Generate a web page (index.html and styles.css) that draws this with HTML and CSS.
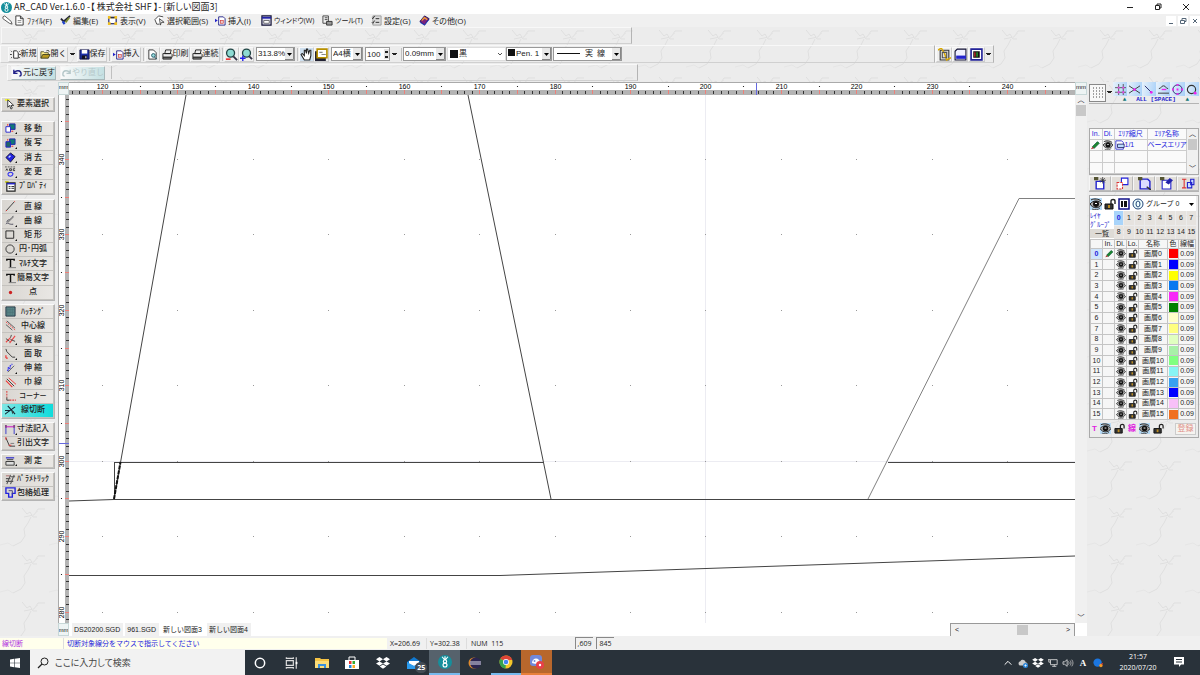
FILE: index.html
```html
<!DOCTYPE html>
<html lang="ja">

<head>
  <meta charset="UTF-8" />
  <meta name="viewport" content="width=device-width, initial-scale=1.0" />
  <title>AR_CAD Ver.1.6.0</title>
  <link rel="stylesheet" href="styles.css">
</head>

<body>
  <!-- icon sprite -->
  <svg class="sprite" aria-hidden="true">
    <symbol id="i-logo" viewBox="0 0 12 12">
      <circle cx="6" cy="6" r="6" fill="#168f9c" />
      <path d="M6 4.500L3.500 1.500M6 4.500L8.500 1.500M6 4.500V1" stroke="#fff" fill="none" />
      <circle cx="6" cy="5.500" r="1.400" fill="none" stroke="#fff" />
      <circle cx="6" cy="8.600" r="1.700" fill="none" stroke="#fff" />
    </symbol>
    <symbol id="i-pencil" viewBox="0 0 12 12">
      <path d="M1 2l2-1 7 6 1 3-3-1-7-5z" fill="#fff" stroke="#555" />
    </symbol>
    <symbol id="i-page" viewBox="0 0 12 12">
      <path d="M2 1h5l3 3v7H2zM7 1v3h3" fill="#fff" stroke="#333" />
      <path d="M4 6h4M4 8h4" stroke="#888" />
    </symbol>
    <symbol id="i-edit" viewBox="0 0 12 12">
      <path d="M1 4l3 3 7-6" stroke="#223" stroke-width="2" fill="none" />
      <path d="M3 7l2 3" stroke="#24c" stroke-width="2.500" />
      <path d="M6 8l4-5" stroke="#7a8a30" stroke-width="2" />
    </symbol>
    <symbol id="i-view" viewBox="0 0 12 12">
      <rect x="2" y="2.500" width="8" height="7" fill="#fff" stroke="#226" stroke-width="1.300" />
      <path d="M1 1h3v3H1zM8 1h3v3H8zM1 8h3v3H1zM8 8h3v3H8z" fill="#f0c020" />
      <path d="M4 3h4" stroke="#333" stroke-width="1.500" />
    </symbol>
    <symbol id="i-range" viewBox="0 0 12 12">
      <path d="M10 2L5 1 1 5l2 5 3 0M6 4l1 7 1-3 3 0z" fill="#fff" stroke="#444" />
    </symbol>
    <symbol id="i-insert" viewBox="0 0 12 12">
      <path d="M4 2h5l2 2v7H4z" fill="#fff" stroke="#228" />
      <path d="M0 4l3 2-3 2z" fill="#22c" />
      <rect x="6" y="6" width="3" height="3" fill="#ecc" stroke="#c33" stroke-width=".7" />
    </symbol>
    <symbol id="i-window" viewBox="0 0 12 12">
      <path d="M1 1h10v10H1z" fill="#dde" stroke="#113" stroke-width="1.300" />
      <path d="M1 2h10v2H1z" fill="#22a" />
      <path d="M3 6h6v3H3z" fill="#fff" stroke="#333" stroke-width=".7" />
    </symbol>
    <symbol id="i-tool" viewBox="0 0 12 12">
      <path d="M1 1h6v8H1zM3 3h3M3 5h3" fill="#eee" stroke="#444" />
      <path d="M5 7h6v4H5z" fill="#999" stroke="#333" />
    </symbol>
    <symbol id="i-set" viewBox="0 0 12 12">
      <path d="M2 1h9v10H2z" fill="#ddd" stroke="#999" />
      <path d="M1 3l1 1 2-3M1 8l1 1 2-3M5 4h4M5 8h4" stroke="#222" fill="none" />
    </symbol>
    <symbol id="i-book" viewBox="0 0 12 12">
      <path d="M1 7l5-6 5 3-5 7z" fill="#7a2380" stroke="#215" />
      <path d="M3 6l3-3 3 2" stroke="#e93" fill="none" stroke-width="1.500" />
      <path d="M1 8l5 3 5-6" stroke="#24c" fill="none" />
    </symbol>
    <symbol id="i-new" viewBox="0 0 12 12">
      <path d="M4 2h3l2 2v6H4z" fill="#fff" stroke="#222" />
      <path d="M1 2l1 1M0 6h2M1 10l1-1M11 2l-1 1M12 6h-2M11 10l-1-1" stroke="#333" />
    </symbol>
    <symbol id="i-open" viewBox="0 0 12 12">
      <path d="M1 10V3h3l1 1h4v2" fill="#fe8" stroke="#553" />
      <path d="M1 10l2-4h8l-2 4z" fill="#b99a20" stroke="#442" />
      <path d="M7 2c2-1 3 0 3 1" fill="none" stroke="#222" />
    </symbol>
    <symbol id="i-save" viewBox="0 0 12 12">
      <path d="M1 1h10v10H1z" fill="#1c2fa8" stroke="#114" />
      <path d="M3 1h6v4H3z" fill="#fff" />
      <path d="M3 7h6v4H3z" fill="#112" />
      <path d="M7 8h1v2H7z" fill="#fff" />
    </symbol>
    <symbol id="i-preview" viewBox="0 0 12 12">
      <path d="M2 1h5l3 3v7H2z" fill="#fff" stroke="#333" />
      <circle cx="7" cy="7" r="2" fill="#9dd" stroke="#256" />
      <path d="M8 9l3 2" stroke="#256" />
    </symbol>
    <symbol id="i-print" viewBox="0 0 12 12">
      <path d="M3 5l1-4h6l-1 4zM1 5h9l1 1v3H1z" fill="#eee" stroke="#222" />
      <path d="M1 9h9v2H1z" fill="#888" stroke="#222" />
    </symbol>
    <symbol id="i-zoomout" viewBox="0 0 14 14">
      <circle cx="6" cy="5.500" r="4.300" fill="#8edbd3" stroke="#244" stroke-width="1.400" />
      <path d="M9 9l4 4" stroke="#334" stroke-width="2" />
      <path d="M1 12h5" stroke="#e22" stroke-width="1.600" />
    </symbol>
    <symbol id="i-zoomin" viewBox="0 0 14 14">
      <circle cx="7" cy="5.500" r="4.300" fill="#8edbd3" stroke="#244" stroke-width="1.400" />
      <path d="M10 9l3 3" stroke="#334" stroke-width="2" />
      <path d="M0 11h6M3 8v6" stroke="#22e" stroke-width="1.500" />
    </symbol>
    <symbol id="i-hand" viewBox="0 0 12 12">
      <path d="M4 11L1 6l1-1 2 2V2l1 0 1 3V1h1l1 4 1-3 1 0v5l-1 4z" fill="#fff" stroke="#222" />
    </symbol>
    <symbol id="i-sheet" viewBox="0 0 12 12">
      <path d="M0 3h10v9H0z" fill="#223" />
      <path d="M2 1h9v8H2z" fill="#fff" stroke="#b89000" stroke-width="1.500" />
      <path d="M4 4h3M6 6h4" stroke="#888" />
    </symbol>
    <symbol id="i-p1" viewBox="0 0 12 12">
      <path d="M2 2h8v9H2z" fill="#ddd" stroke="#333" />
      <path d="M0 2l3-2 3 5 2 6 4-2" fill="none" stroke="#d9a800" stroke-width="1.300" />
      <path d="M4 4h4v5H4z" fill="none" stroke="#555" />
    </symbol>
    <symbol id="i-p2" viewBox="0 0 12 12">
      <path d="M1 3l2-2h8v10H1z" fill="#eef" stroke="#113" />
      <path d="M2 7h9v3H2z" fill="#22c" />
    </symbol>
    <symbol id="i-p3" viewBox="0 0 12 12">
      <path d="M1 1h10v10H1z" fill="#fff" stroke="#229" stroke-width="1.500" />
      <path d="M3 3h6v6H3z" fill="#111" />
      <path d="M4 4h1v4H4z" fill="#e33" />
      <path d="M6 4h1v4H6z" fill="#3c3" />
    </symbol>
    <symbol id="i-undo" viewBox="0 0 12 12">
      <path d="M2 3v4h4M2 7c2-4 8-4 8 1 0 1-1 2-2 2" fill="none" stroke="currentColor" stroke-width="1.500" />
    </symbol>
    <symbol id="i-redo" viewBox="0 0 12 12">
      <path d="M10 3v4H6M10 7C8 3 2 3 2 8c0 1 1 2 2 2" fill="none" stroke="currentColor" stroke-width="1.500" />
    </symbol>
    <!-- left palette -->
    <symbol id="t-select" viewBox="0 0 12 12">
      <path d="M0 1h5" stroke="#ee3" stroke-width="2" />
      <path d="M3 1v8l2-2 1.500 4 1.500-1-1.500-3h3z" fill="#fff" stroke="#333" />
    </symbol>
    <symbol id="t-move" viewBox="0 0 12 12">
      <path d="M5 1h6v6H5z" fill="#177" stroke="#22a" />
      <path d="M1 4h5v6H1z" fill="#fff" stroke="#22c" />
      <path d="M3 1v2M9 9h-2" stroke="#e22" />
    </symbol>
    <symbol id="t-copy" viewBox="0 0 12 12">
      <path d="M5 1h6v6H5z" fill="#177" stroke="#22a" />
      <path d="M1 4h5v6H1z" fill="#266" stroke="#22c" />
      <path d="M3 1v2M9 9h-2" stroke="#e22" />
    </symbol>
    <symbol id="t-erase" viewBox="0 0 12 12">
      <path d="M1 6l5-5 5 4-5 6z" fill="#22d" stroke="#113" />
      <path d="M4 6l2-2" stroke="#cdf" stroke-width="1.500" />
    </symbol>
    <symbol id="t-change" viewBox="0 0 12 12">
      <path d="M0 1h12" stroke="#555" stroke-dasharray="2 1" />
      <path d="M1 5l1-2 1 2M5 3v2h2V3zM11 3H9v2h2" stroke="#333" fill="none" />
      <path d="M3 9c1-3 5-3 6 0M9 8c-1 4-5 4-6 1" stroke="#33e" fill="none" stroke-width="1.200" />
    </symbol>
    <symbol id="t-prop" viewBox="0 0 12 12">
      <path d="M0 0h4v2H0z" fill="#cc3" />
      <path d="M2 2h9v9H2z" fill="#fff" stroke="#222" stroke-width="1.300" />
      <path d="M2 3h9" stroke="#22c" stroke-width="1.500" />
      <path d="M4 6h2M4 8h2M7 6h3M7 8h3" stroke="#222" />
    </symbol>
    <symbol id="t-line" viewBox="0 0 12 12"><path d="M1 11L10 1" stroke="#333" /><path d="M10 0l1 1M1 11l1-1" stroke="#e33" /></symbol>
    <symbol id="t-curve" viewBox="0 0 12 12"><path d="M2 8c1-5 3 0 7-7M1 10c2-3 3 1 8 0" stroke="#445" fill="none" /><path d="M3 8l6-6" stroke="#888" stroke-width="1.500" /></symbol>
    <symbol id="t-rect" viewBox="0 0 12 12"><path d="M1 1h8.500v8H1z" fill="none" stroke="#222" /></symbol>
    <symbol id="t-circle" viewBox="0 0 12 12"><circle cx="5.500" cy="5.500" r="4.500" fill="none" stroke="#333" /></symbol>
    <symbol id="t-text" viewBox="0 0 12 12"><path d="M2 3V1.500h8V3M6 2v8" fill="none" stroke="#111" stroke-width="1.600" /><path d="M4 10.500h8" stroke="#777" /></symbol>
    <symbol id="t-point" viewBox="0 0 12 12"><circle cx="6" cy="6" r="1.800" fill="#c22" /></symbol>
    <symbol id="t-hatch" viewBox="0 0 12 12"><path d="M1 1h10v10H1z" fill="#5a8588" stroke="#234" /><path d="M3 1v10M5.500 1v10M8 1v10M1 4h10M1 7h10" stroke="#486e74" stroke-width=".6" /></symbol>
    <symbol id="t-center" viewBox="0 0 12 12"><path d="M2 1l9 8M1 5l7 6" stroke="#555" /><path d="M1 2l10 9" stroke="#e44" stroke-dasharray="2 1" /></symbol>
    <symbol id="t-double" viewBox="0 0 12 12"><path d="M1 9l5-5M5 10l6-8" stroke="#e44" stroke-width="1.200" /><path d="M1 5l4 3M7 1l-1 3M6 6l5 2" stroke="#444" /></symbol>
    <symbol id="t-chamfer" viewBox="0 0 12 12"><path d="M1 1l1 3 6 6h3" stroke="#333" fill="none" /><path d="M1 8v3M3 11H1" stroke="#e33" stroke-width="1.300" /></symbol>
    <symbol id="t-extend" viewBox="0 0 12 12"><path d="M3 6l5-5M6 5L2 9" stroke="#33e" stroke-width="1.400" stroke-dasharray="2 1" /><path d="M3 10l7-7" stroke="#555" /></symbol>
    <symbol id="t-width" viewBox="0 0 12 12"><path d="M1 4l7 7" stroke="#e33" stroke-width="1.200" /><path d="M4 1l8 7" stroke="#e33" /><path d="M2 2l8 8" stroke="#333" /></symbol>
    <symbol id="t-corner" viewBox="0 0 12 12"><path d="M2 0v7M5 10h7" stroke="#d44" stroke-dasharray="2 1" stroke-width="1.200" /><path d="M2 7v3h3" stroke="#333" fill="none" /></symbol>
    <symbol id="t-cut" viewBox="0 0 12 12"><path d="M0 10L11 2M3 1l8 9M0 6h6" stroke="#123" stroke-width="1.200" /><path d="M7 6l3 1-2 3z" fill="#344" /></symbol>
    <symbol id="t-dim" viewBox="0 0 12 12"><path d="M1 11V3M10 11V3" stroke="#33c" /><path d="M1 3h9" stroke="#c3c" stroke-width="1.300" /><path d="M0 1h2v3H0zM9 1h2v3H9z" fill="#848" /></symbol>
    <symbol id="t-leader" viewBox="0 0 12 12"><path d="M1 1l4 9h6" stroke="#333" fill="none" /><path d="M4 9h3M1 0v3" stroke="#e33" /><path d="M6 7h4" stroke="#777" /></symbol>
    <symbol id="t-measure" viewBox="0 0 12 12"><path d="M1 2h9" stroke="#33c" stroke-width="1.400" /><path d="M1 6h9v4H1zM2 4h7" fill="#ddd" stroke="#333" /></symbol>
    <symbol id="t-param" viewBox="0 0 12 12"><path d="M2 11L6 1M6 11l4-10M1 5h5M6 3h5M1 8h8" stroke="#555" stroke-width="1.200" fill="none" /><path d="M1 2h4" stroke="#a66" /></symbol>
    <symbol id="t-wrap" viewBox="0 0 12 12"><path d="M1 1h10v6H8v4H4V7H1z" fill="none" stroke="#22d" stroke-width="1.500" /><path d="M4 4h4v4" fill="none" stroke="#447" /></symbol>
    <!-- right panel -->
    <symbol id="s-grid" viewBox="0 0 12 12"><path d="M4 0v12M9 0v12M0 4h12M0 9h12" stroke="#555" /><path d="M3 3h2v2H3zM8 3h2v2H8zM3 8h2v2H3zM8 8h2v2H8z" fill="#e4e" /></symbol>
    <symbol id="s-cross" viewBox="0 0 12 12"><path d="M0 2l12 8M0 10l12-8" stroke="#333" /><circle cx="6" cy="6" r="1.500" fill="#e2e" /></symbol>
    <symbol id="s-end" viewBox="0 0 12 12"><path d="M2 2l7 7" stroke="#226" /><circle cx="9" cy="9" r="1.500" fill="#e2e" /></symbol>
    <symbol id="s-mid" viewBox="0 0 12 12"><path d="M1 5c3 0 2-3 5-3s2 3 5 3M0 10h12" fill="none" stroke="#333" /><path d="M4 6h5" stroke="#e2e" stroke-width="1.500" /></symbol>
    <symbol id="s-cen" viewBox="0 0 12 12"><circle cx="6" cy="6" r="5" fill="none" stroke="#226" /><path d="M6 5v2M6 0v2M6 10v2M0 6h2M10 6h2" stroke="#e2e" stroke-width="2" /></symbol>
    <symbol id="s-tan" viewBox="0 0 12 12"><circle cx="6" cy="6" r="4.500" fill="none" stroke="#333" stroke-width="1.200" /><circle cx="10" cy="10" r="1.500" fill="#e2e" /></symbol>
    <symbol id="s-dots" viewBox="0 0 12 12"><path d="M1 1h11M1 4h11M1 7h11M1 10h11" stroke="#444" stroke-dasharray="1 2" /></symbol>
    <symbol id="i-eye" viewBox="0 0 12 12">
      <path d="M1 2c3-2 8-1 10 1M0 6c3-4 9-4 12 0-3 5-9 5-12 0z" fill="#aaa" stroke="#222" />
      <circle cx="6" cy="6" r="3" fill="#111" />
      <path d="M5 5h2v1H5z" fill="#fff" />
      <path d="M2 11c3 1 6 1 8-1" stroke="#555" fill="none" />
    </symbol>
    <symbol id="i-lock" viewBox="0 0 12 12">
      <path d="M7 6V3c0-2 4-2 4 0v3" fill="none" stroke="#222" stroke-width="1.400" />
      <path d="M1 6h8v5H1z" fill="#333" stroke="#111" />
      <path d="M4 7h2v3H4z" fill="#b98a20" />
    </symbol>
    <symbol id="i-pen" viewBox="0 0 12 12">
      <path d="M3 8l6-6 2 2-6 6z" fill="#1a8a2a" stroke="#053" />
      <path d="M1 11l2-3 2 2z" fill="#a33" />
    </symbol>
    <symbol id="i-area" viewBox="0 0 12 12"><path d="M1 1h7l2 2v8H1z" fill="#fff" stroke="#22c" /><path d="M3 5h8v4H3z" fill="#bdf" stroke="#226" /></symbol>
    <symbol id="a-new" viewBox="0 0 12 12"><path d="M2 4h7v7H2z" fill="#fff" stroke="#22c" stroke-width="1.300" /><path d="M0 0h4v3H0z" fill="#553" /><path d="M8 0v6M5 3h6M6 1l4 4M10 1L6 5" stroke="#333" stroke-width=".7" /></symbol>
    <symbol id="a-copy" viewBox="0 0 12 12"><path d="M5 1h6v6H5z" fill="#fff" stroke="#22d" /><path d="M1 5h5v6H1z" fill="#fff" stroke="#d33" stroke-dasharray="2 1" /></symbol>
    <symbol id="a-prop" viewBox="0 0 12 12"><path d="M2 2h7l2 2v7H2z" fill="#ddf" stroke="#22c" stroke-width="1.300" /><path d="M0 0h4v3H0z" fill="#553" /><path d="M8 9l4 3" stroke="#333" stroke-width="1.300" /></symbol>
    <symbol id="a-del" viewBox="0 0 12 12"><path d="M2 3h8v8H2z" fill="#fff" stroke="#22c" /><path d="M0 0h4v3H0z" fill="#553" /><path d="M5 5l4-4 3 2-4 4z" fill="#22a" /></symbol>
    <symbol id="a-size" viewBox="0 0 12 12"><path d="M0 2h4M2 2v8M0 10h4" stroke="#d33" fill="none" /><path d="M5 5h4v5H5zM8 2h3v5H8z" fill="#cdf" stroke="#22c" /></symbol>
    <symbol id="i-bars" viewBox="0 0 12 12"><path d="M1 1h10v10H1z" fill="#fff" stroke="#118" stroke-width="1.500" /><path d="M3 3h6v6H3z" fill="#111" /><path d="M5.500 3v6" stroke="#fff" /></symbol>
    <symbol id="i-zero" viewBox="0 0 12 12"><circle cx="6" cy="6" r="5" fill="#eff" stroke="#247" /><ellipse cx="6" cy="6" rx="2" ry="3" fill="none" stroke="#247" /></symbol>
    <!-- taskbar -->
    <symbol id="w-start" viewBox="0 0 12 12"><path d="M0 1.700L5 1v4.700H0zM5.700 .9L12 0v5.700H5.700zM0 6.300h5V11l-5-.7zM5.700 6.300H12V12l-6.300-.9z" fill="#fff" /></symbol>
    <symbol id="w-search" viewBox="0 0 12 12"><circle cx="7.500" cy="4.500" r="3.500" fill="none" stroke="#222" /><path d="M5 7L1 11" stroke="#222" stroke-width="1.200" /></symbol>
    <symbol id="w-cortana" viewBox="0 0 12 12"><circle cx="6" cy="6" r="4" fill="none" stroke="#fff" stroke-width="1.300" /></symbol>
    <symbol id="w-view" viewBox="0 0 12 12"><path d="M2 1v1h6V1M2 11v-1h6v1M2 4h6v4H2zM10.500 1v10" fill="none" stroke="#ddd" /><path d="M10 5h1.500v2H10z" fill="#fff" /></symbol>
    <symbol id="w-folder" viewBox="0 0 14 12"><path d="M0 1h5l1 1h8v9H0z" fill="#f6c445" /><path d="M0 4h14v7H0z" fill="#fbdc78" /><path d="M3 7h8v4H9V9H5v2H3z" fill="#3a8fdc" /></symbol>
    <symbol id="w-store" viewBox="0 0 14 14"><path d="M4 4V1h6v3" fill="none" stroke="#fff" /><path d="M0 4h14v9H0z" fill="#fff" /><path d="M4 5h2.500v3H4z" fill="#e33" /><path d="M7.500 5H10v3H7.500z" fill="#3a3" /><path d="M4 9h2.500v3H4z" fill="#28d" /><path d="M7.500 9H10v3H7.500z" fill="#fa2" /></symbol>
    <symbol id="w-dropbox" viewBox="0 0 14 12"><path d="M3.500 0L7 2.200 3.500 4.400 0 2.200zM10.500 0L14 2.200l-3.500 2.200L7 2.200zM3.500 4.400L7 6.600 3.500 8.800 0 6.600zM10.500 4.400L14 6.600l-3.500 2.200L7 6.600zM7 7.500l3.300 2.100L7 11.800 3.700 9.600z" fill="#fff" /></symbol>
    <symbol id="w-mail" viewBox="0 0 14 12"><path d="M0 5l7-5 7 5v7H0z" fill="#1179d0" /><path d="M2 4h10v3L7 9 2 7z" fill="#fff" /><path d="M0 5l7 4 7-4v7H0z" fill="#2a9bee" /></symbol>
    <symbol id="w-eclipse" viewBox="0 0 14 12"><circle cx="6" cy="6" r="5.500" fill="#e08a2c" /><circle cx="7.500" cy="6" r="5.500" fill="#2b2550" /><path d="M2 5h11M2 7h11" stroke="#dde" stroke-width="1.200" /></symbol>
    <symbol id="w-chrome" viewBox="0 0 14 14"><circle cx="7" cy="7" r="6.500" fill="#f4c62a" /><path d="M7 7L1.400 3.700A6.500 6.500 0 0 1 12.600 3.700z" fill="#dd4436" /><path d="M7 7L1.400 3.700A6.500 6.500 0 0 0 6.500 13.500z" fill="#35a350" /><path d="M7 4h6v1H7z" fill="#dd4436" /><circle cx="7" cy="7" r="3" fill="#fff" /><circle cx="7" cy="7" r="2.300" fill="#4285f4" /></symbol>
    <symbol id="w-discord" viewBox="0 0 14 14"><rect width="12" height="11" x="0" y="0" rx="3" fill="#7289da" /><path d="M2 8c0-6 8-6 8 0-2 1-6 1-8 0z" fill="#fff" /><circle cx="4.500" cy="6" r="1" fill="#7289da" /><circle cx="10" cy="10" r="4" fill="#e8404a" /><circle cx="10" cy="10" r="1.200" fill="#fff" /></symbol>
    <symbol id="w-up" viewBox="0 0 12 12"><path d="M2 8l4-4 4 4" fill="none" stroke="#fff" stroke-width="1.200" /></symbol>
    <symbol id="w-cloud" viewBox="0 0 12 12"><path d="M1 8c-1-3 1-4 2-4 1-3 6-2 6 1 3 0 3 4 0 4H2z" fill="#ccc" /><circle cx="9" cy="9" r="3" fill="#2b85d8" /><path d="M7.500 9h3M9 7.500v3" stroke="#fff" stroke-width=".8" /></symbol>
    <symbol id="w-net" viewBox="0 0 12 12"><path d="M3 2h8v6H3zM5 10h5M7.500 8v2M0 2h3M1 2v3h2" fill="none" stroke="#ddd" /></symbol>
    <symbol id="w-vol" viewBox="0 0 12 12"><path d="M0 4.500h2L5 2v8L2 7.500H0z" fill="none" stroke="#eee" stroke-width=".9" /><path d="M6.500 4c1 1 1 3 0 4M8.500 3c1.500 2 1.500 4 0 6M10.500 2c2 3 2 5 0 8" fill="none" stroke="#ccc" stroke-width=".9" /></symbol>
    <symbol id="w-ball" viewBox="0 0 12 12"><circle cx="5.500" cy="5.500" r="5" fill="#1b76e0" /><circle cx="9.500" cy="9" r="2" fill="#f09a2a" /><circle cx="11" cy="7" r="1" fill="#d33" /></symbol>
    <symbol id="w-note" viewBox="0 0 12 12"><path d="M1 1h10v7.500H8L6 11V8.500H1z" fill="#fff" /><path d="M3 3.500h6M3 6h6" stroke="#29323a" /></symbol>
  </svg>

  <header class="titlebar">
    <svg class="icon"><use href="#i-logo" /></svg>
    <h1>AR_CAD Ver.1.6.0 -【 株式会社 SHF 】- [新しい図面3]</h1>
    <div class="win-buttons">
      <button aria-label="最小化"><svg viewBox="0 0 10 10"><path d="M2 5.500h6" /></svg></button>
      <button aria-label="元に戻す(縮小)"><svg viewBox="0 0 10 10"><path d="M2.500 3.500h4v4h-4zM4 3.500V2h4v4H6.500" /></svg></button>
      <button aria-label="閉じる"><svg viewBox="0 0 10 10"><path d="M2 2l6 6M8 2L2 8" /></svg></button>
    </div>
  </header>

  <nav class="menubar">
    <svg class="icon"><use href="#i-pencil" /></svg>
    <button><svg class="icon"><use href="#i-page" /></svg>ﾌｧｲﾙ(F)</button>
    <button><svg class="icon"><use href="#i-edit" /></svg>編集(E)</button>
    <button><svg class="icon"><use href="#i-view" /></svg>表示(V)</button>
    <button><svg class="icon"><use href="#i-range" /></svg>選択範囲(S)</button>
    <button><svg class="icon"><use href="#i-insert" /></svg>挿入(I)</button>
    <button class="tight"><svg class="icon"><use href="#i-window" /></svg>ウィンドウ(W)</button>
    <button class="tight"><svg class="icon"><use href="#i-tool" /></svg>ツール(T)</button>
    <button><svg class="icon"><use href="#i-set" /></svg>設定(G)</button>
    <button><svg class="icon"><use href="#i-book" /></svg>その他(O)</button>
    <div class="mdi-buttons">
      <button aria-label="最小化"><svg viewBox="0 0 10 10"><path d="M3 7.500h4" /></svg></button>
      <button aria-label="元のサイズ"><svg viewBox="0 0 10 10"><path d="M2.500 4.500h4v3h-4zM4 4V2.500h4v3H7" /></svg></button>
      <button aria-label="図面を閉じる"><svg viewBox="0 0 10 10"><path d="M3 3l4 4M7 3L3 7" /></svg></button>
    </div>
  </nav>

  <div class="toolbars marble">
    <div class="bar bar-empty"></div>
    <div class="bar-row">
      <div class="bar bar-main">
        <button class="tb w30"><svg class="icon"><use href="#i-new" /></svg>新規</button>
        <button class="tb w30"><svg class="icon"><use href="#i-open" /></svg>開く</button>
        <button class="drop" aria-label="最近の図面"></button>
        <button class="tb w30"><svg class="icon"><use href="#i-save" /></svg>保存</button>
        <span class="sep"></span>
        <button class="tb w30"><svg class="icon"><use href="#i-insert" /></svg>挿入</button>
        <span class="sep"></span>
        <button class="tb w14" aria-label="プレビュー"><svg class="icon"><use href="#i-preview" /></svg></button>
        <button class="tb w30"><svg class="icon"><use href="#i-print" /></svg>印刷</button>
        <button class="tb w30"><svg class="icon"><use href="#i-print" /></svg>連続</button>
        <span class="sep"></span>
        <button class="tb w14" aria-label="縮小"><svg class="icon big"><use href="#i-zoomout" /></svg></button>
        <button class="tb w14" aria-label="拡大"><svg class="icon big"><use href="#i-zoomin" /></svg></button>
        <select class="s-zoom" aria-label="倍率"><option>313.8%</option></select>
        <span class="sep"></span>
        <button class="tb w14 on" aria-label="移動表示"><svg class="icon big"><use href="#i-hand" /></svg></button>
        <button class="tb w14" aria-label="用紙"><svg class="icon big"><use href="#i-sheet" /></svg></button>
        <select class="s-paper" aria-label="用紙サイズ"><option>A4横</option></select>
        <span class="spin"><input type="text" value="100" aria-label="縮尺"><i></i></span>
        <button class="drop" aria-label="縮尺一覧"></button>
        <span class="sep"></span>
        <select class="s-width" aria-label="線幅"><option>0.09mm</option></select>
        <select class="s-color" aria-label="色"><option>黒</option></select>
        <select class="s-pen" aria-label="ペン"><option>Pen. 1</option></select>
        <select class="s-style" aria-label="線種"><option>実&ensp;線</option></select>
      </div>
      <div class="bar bar-end">
        <button class="tb w16" aria-label="パネル1"><svg class="icon big"><use href="#i-p1" /></svg></button>
        <button class="tb w16" aria-label="パネル2"><svg class="icon big"><use href="#i-p2" /></svg></button>
        <button class="tb w16" aria-label="パネル3"><svg class="icon big"><use href="#i-p3" /></svg></button>
        <button class="drop" aria-label="パネル一覧"></button>
      </div>
    </div>
    <div class="bar bar-undo">
      <button class="undo"><svg class="icon"><use href="#i-undo" /></svg>元に戻す</button>
      <button class="undo" disabled><svg class="icon"><use href="#i-redo" /></svg>やり直し</button>
      <span class="sep"></span>
    </div>
  </div>

  <main class="main">
    <aside class="palette marble">
      <div class="group g1 first">
        <button><svg class="icon"><use href="#t-select" /></svg><span>要素選択</span></button>
      </div>
      <div class="group g5">
        <button class="sub"><svg class="icon"><use href="#t-move" /></svg><span>移 動</span></button>
        <button class="sub"><svg class="icon"><use href="#t-copy" /></svg><span>複 写</span></button>
        <button class="sub"><svg class="icon"><use href="#t-erase" /></svg><span>消 去</span></button>
        <button class="sub"><svg class="icon"><use href="#t-change" /></svg><span>変 更</span></button>
        <button><svg class="icon"><use href="#t-prop" /></svg><span>ﾌﾟﾛﾊﾟﾃｨ</span></button>
      </div>
      <div class="group g7">
        <button class="sub"><svg class="icon"><use href="#t-line" /></svg><span>直 線</span></button>
        <button class="sub"><svg class="icon"><use href="#t-curve" /></svg><span>曲 線</span></button>
        <button class="sub"><svg class="icon"><use href="#t-rect" /></svg><span>矩 形</span></button>
        <button class="sub"><svg class="icon"><use href="#t-circle" /></svg><span>円･円弧</span></button>
        <button><svg class="icon"><use href="#t-text" /></svg><span>ﾏﾙﾁ文字</span></button>
        <button><svg class="icon"><use href="#t-text" /></svg><span>簡易文字</span></button>
        <button><svg class="icon"><use href="#t-point" /></svg><span>点</span></button>
      </div>
      <div class="group g8">
        <button><svg class="icon"><use href="#t-hatch" /></svg><span>ﾊｯﾁﾝｸﾞ</span></button>
        <button><svg class="icon"><use href="#t-center" /></svg><span>中心線</span></button>
        <button class="sub"><svg class="icon"><use href="#t-double" /></svg><span>複 線</span></button>
        <button class="sub"><svg class="icon"><use href="#t-chamfer" /></svg><span>面 取</span></button>
        <button class="sub"><svg class="icon"><use href="#t-extend" /></svg><span>伸 縮</span></button>
        <button><svg class="icon"><use href="#t-width" /></svg><span>巾 線</span></button>
        <button class="tight"><svg class="icon"><use href="#t-corner" /></svg><span>コーナー</span></button>
        <button class="active"><svg class="icon"><use href="#t-cut" /></svg><span>線切断</span></button>
      </div>
      <div class="group g2">
        <button class="sub"><svg class="icon"><use href="#t-dim" /></svg><span>寸法記入</span></button>
        <button><svg class="icon"><use href="#t-leader" /></svg><span>引出文字</span></button>
      </div>
      <div class="group g1">
        <button class="sub"><svg class="icon"><use href="#t-measure" /></svg><span>測 定</span></button>
      </div>
      <div class="group g2">
        <button><svg class="icon"><use href="#t-param" /></svg><span>ﾊﾟﾗﾒﾄﾘｯｸ</span></button>
        <button><svg class="icon"><use href="#t-wrap" /></svg><span>包絡処理</span></button>
      </div>
    </aside>

    <section class="workspace">
      <div class="unit">mm</div>
      <svg class="ruler-x" id="rulerX"></svg>
      <div class="unit">mm</div>
      <svg class="ruler-y" id="rulerY"></svg>
      <svg class="drawing" id="drawing">
        <path class="guide" d="M0 366.500H2000M636.500 0V1000" />
        <g id="dots"></g>
        <path class="cad" d="M117 0L45 404M399 0L482 404M45 367.500H475M45.500 367V404" />
        <path class="cad" d="M0 406L45 404.500H1006M0 480.500H431L1006 461" />
        <path class="cad soft" d="M799 404L950 103.500H1006" />
        <path class="cad" d="M819 367.500H1006" />
        <path class="cad picked" d="M45 404L51.500 367" />
      </svg>
      <div class="scroll-y"><button aria-label="上へ">︿</button><i></i><button class="down" aria-label="下へ">﹀</button></div>
      <div class="unit foot">mm</div>
      <div class="sheets">
        <button>DS20200.SGD</button>
        <button>961.SGD</button>
        <button class="current">新しい図面3</button>
        <button>新しい図面4</button>
        <div class="scroll-x"><button aria-label="左へ">&lt;</button><i></i><button aria-label="右へ">&gt;</button></div>
      </div>
      <div></div>
    </section>

    <aside class="side marble">
      <div class="snap">
        <button class="snap-grid" aria-label="グリッド"><svg><use href="#s-dots" /></svg></button>
        <button class="drop" aria-label="グリッド設定"></button>
        <div class="snap-set">
          <div class="snap-icons">
            <button aria-label="格子点"><svg class="icon"><use href="#s-grid" /></svg></button>
            <button aria-label="交点"><svg class="icon"><use href="#s-cross" /></svg></button>
            <button aria-label="端点"><svg class="icon"><use href="#s-end" /></svg></button>
            <button aria-label="中点"><svg class="icon"><use href="#s-mid" /></svg></button>
            <button aria-label="中心"><svg class="icon"><use href="#s-cen" /></svg></button>
            <button aria-label="円周"><svg class="icon"><use href="#s-tan" /></svg></button>
          </div>
          <div class="snap-all"><i>▲</i>ALL [SPACE]<i>▲</i></div>
        </div>
      </div>

      <div class="areas">
        <table>
          <thead>
            <tr><th>In.</th><th>Di.</th><th>ｴﾘｱ縮尺</th><th>ｴﾘｱ名称</th></tr>
          </thead>
          <tbody>
            <tr>
              <td><svg class="icon"><use href="#i-pen" /></svg></td>
              <td><svg class="icon"><use href="#i-eye" /></svg></td>
              <td><svg class="icon"><use href="#i-area" /></svg>1/1</td>
              <td class="name">ベースエリア</td>
            </tr>
            <tr><td></td><td></td><td></td><td></td></tr>
            <tr><td></td><td></td><td></td><td></td></tr>
          </tbody>
        </table>
        <div class="scroll-y"><button aria-label="上へ">︿</button><i></i><button class="down" aria-label="下へ">﹀</button></div>
      </div>
      <div class="area-tools">
        <button aria-label="新規エリア"><svg class="icon big"><use href="#a-new" /></svg></button>
        <button aria-label="複写"><svg class="icon big"><use href="#a-copy" /></svg></button>
        <button aria-label="設定"><svg class="icon big"><use href="#a-prop" /></svg></button>
        <button aria-label="削除"><svg class="icon big"><use href="#a-del" /></svg></button>
        <button aria-label="サイズ"><svg class="icon big"><use href="#a-size" /></svg></button>
      </div>

      <div class="layers">
        <div class="layer-head">
          <svg class="icon lit"><use href="#i-eye" /></svg>
          <svg class="icon"><use href="#i-lock" /></svg>
          <svg class="icon"><use href="#i-bars" /></svg>
          <svg class="icon"><use href="#i-zero" /></svg>
          <select class="s-group" aria-label="グループ"><option>グループ 0</option></select>
        </div>
        <div class="layer-groups">
          <div class="group-label">ﾚｲﾔ<br>ｸﾞﾙｰﾌﾟ<button>一覧</button></div>
          <div class="numbers" id="numbers"></div>
        </div>
        <table>
          <thead>
            <tr><th></th><th>In.</th><th>Di.</th><th>Lo.</th><th>名称</th><th>色</th><th>線幅</th></tr>
          </thead>
          <tbody id="layerRows"></tbody>
        </table>
        <div class="layer-foot">
          <b>T</b>
          <svg class="icon lit"><use href="#i-eye" /></svg>
          <svg class="icon"><use href="#i-lock" /></svg>
          <b>線</b>
          <svg class="icon lit"><use href="#i-eye" /></svg>
          <svg class="icon"><use href="#i-lock" /></svg>
          <button>登録</button>
        </div>
      </div>
    </aside>
  </main>

  <div class="status">
    <span class="mode">線切断</span>
    <span class="hint">切断対象線分をマウスで指示してください</span>
    <span class="pos">X=206.69</span>
    <span class="pos">Y=302.38</span>
    <span class="num">NUM&nbsp; 115</span>
    <span class="box">,609</span>
    <span class="box">845</span>
  </div>

  <footer class="taskbar">
    <button class="start" aria-label="スタート"><svg><use href="#w-start" /></svg></button>
    <label class="search"><svg><use href="#w-search" /></svg><input type="text" placeholder="ここに入力して検索" aria-label="検索"></label>
    <div class="apps">
      <button aria-label="Cortana"><svg><use href="#w-cortana" /></svg></button>
      <button aria-label="タスクビュー"><svg><use href="#w-view" /></svg></button>
      <button aria-label="エクスプローラー"><svg><use href="#w-folder" /></svg></button>
      <button aria-label="ストア"><svg><use href="#w-store" /></svg></button>
      <button aria-label="Dropbox"><svg><use href="#w-dropbox" /></svg></button>
      <button aria-label="メール"><svg><use href="#w-mail" /></svg><em>25</em></button>
      <button class="cad-app" aria-label="AR_CAD"><svg><use href="#i-logo" /></svg></button>
      <button aria-label="Eclipse"><svg><use href="#w-eclipse" /></svg></button>
      <button class="running" aria-label="Chrome"><svg><use href="#w-chrome" /></svg></button>
      <button class="alert" aria-label="Discord"><svg><use href="#w-discord" /></svg></button>
    </div>
    <div class="tray">
      <svg><use href="#w-up" /></svg>
      <svg><use href="#w-cloud" /></svg>
      <svg><use href="#w-dropbox" /></svg>
      <svg><use href="#w-net" /></svg>
      <svg><use href="#w-vol" /></svg>
      <b>A</b>
      <svg><use href="#w-ball" /></svg>
    </div>
    <time>21:57<br>2020/07/20</time>
    <svg class="note"><use href="#w-note" /></svg>
  </footer>

  <script src="script.js"></script>
</body>

</html>
```
FILE: styles.css
```css
:root {
  --face: #ececec;
  --edge: #b4b4b4;
  --ui: 'Open Sans', 'Noto Sans CJK JP', sans-serif;
  --gothic: 'Liberation Sans', 'Noto Sans CJK JP', sans-serif;
}

*,
::before,
::after {
  box-sizing: border-box;
}

body {
  margin: 0;
  min-height: 100vh;
  display: flex;
  flex-direction: column;
  background: var(--face);
  color: #222;
  font: 8px/10px var(--gothic);
}

button,
input,
select {
  margin: 0;
  padding: 0;
  border: 0;
  border-radius: 0;
  background: none;
  color: inherit;
  font: inherit;
  white-space: nowrap;
}

i,
em {
  font-style: normal;
}

svg {
  display: block;
  flex: none;
}

table {
  border-collapse: collapse;
  table-layout: fixed;
  width: 100%;
}

th,
td {
  padding: 0;
  font-weight: normal;
  white-space: nowrap;
}

.sprite {
  position: absolute;
  width: 0;
  height: 0;
}

.icon {
  width: 11px;
  height: 11px;
}

.icon.big {
  width: 13px;
  height: 13px;
}

.tight {
  font-size: 7px;
  font-feature-settings: 'palt';
}

.marble {
  background: #ececec url("data:image/svg+xml,%3Csvg xmlns='http://www.w3.org/2000/svg' width='49' height='47'%3E%3Cg fill='none' stroke='%23dfdfdf'%3E%3Cpath d='M22 3l5 6 3-2 3 5 4 0M24 12l10-2 4-6 7 0M31 12l-3 6-4 6 1 7-4 6-8 4'/%3E%3Cpath d='M0 40l8-2 5 3M38 6l-6 5' stroke='%23e5e5e5'/%3E%3C/g%3E%3C/svg%3E");
}

/* title and menu */
.titlebar {
  display: flex;
  align-items: center;
  height: 14px;
  padding-left: 1px;
  gap: 2px;
  background: #fff;
}

.titlebar h1 {
  margin: 0;
  font: 9px/14px 'Noto Sans CJK JP', sans-serif;
  font-feature-settings: 'palt';
}

.win-buttons,
.mdi-buttons {
  display: flex;
  margin-left: auto;
}

.win-buttons button {
  width: 28px;
  display: grid;
  place-items: center;
}

.win-buttons svg,
.mdi-buttons svg {
  width: 10px;
  height: 10px;
  fill: none;
  stroke: #222;
}

.menubar {
  display: grid;
  grid-template-columns: 12px 46px 47px 47px 61px 46px 61px 49px 48px 60px 1fr;
  align-items: center;
  height: 13px;
  padding-left: 2px;
  background: #f0f0f0;
  font: 8px/12px var(--ui);
  font-feature-settings: 'palt';
}

.menubar > button {
  display: flex;
  align-items: center;
  gap: 2px;
}

.mdi-buttons {
  gap: 2px;
}

.mdi-buttons button {
  background: #fff;
}

.mdi-buttons svg {
  stroke: #567;
}

/* toolbars */
.toolbars {
  display: flex;
  flex-direction: column;
  gap: 1px;
  height: 55px;
}

.bar {
  display: flex;
  align-items: center;
  border: 1px solid #f8f8f8;
  border-right-color: var(--edge);
  border-bottom-color: #d0d0d0;
}

.bar-empty {
  width: 631px;
  height: 17px;
  margin-left: 1px;
}

.bar-row {
  display: flex;
  height: 18px;
}

.bar-main {
  flex: none;
  width: 935px;
  padding-left: 7px;
}

.bar-end {
  width: 59px;
}

.bar-undo {
  width: 631px;
  height: 17px;
  margin-left: 7px;
  padding-left: 3px;
  gap: 4px;
}

.tb {
  display: flex;
  align-items: center;
  justify-content: center;
  height: 15px;
  border: 1px solid #f8f8f8;
  border-right-color: #ccc;
  border-bottom-color: #ccc;
  background: #efefef;
}

.tb.on {
  background: #cfe0f0;
}

.w30 {
  width: 30px;
}

.w14 {
  width: 15px;
}

.w16 {
  width: 17px;
}

.sep {
  width: 1px;
  height: 13px;
  margin: 0 1px 0 2px;
  background: #c0c0c0;
}

.drop {
  width: 9px;
  height: 13px;
  background: linear-gradient(#222, #222) 50% 45% / 5px 1px no-repeat, linear-gradient(#222, #222) 50% 54% / 3px 1px no-repeat;
}

select {
  appearance: none;
  height: 14px;
  padding-left: 1px;
  border: 1px solid #999;
  background: #fff url("data:image/svg+xml,%3Csvg xmlns='http://www.w3.org/2000/svg' width='9' height='12'%3E%3Cpath d='M0 0h9v12H0z' fill='%23e8e8e8'/%3E%3Cpath d='M8.500 0v11.500H0' fill='none' stroke='%23888'/%3E%3Cpath d='M2 5h5L4.500 8z'/%3E%3C/svg%3E") right center no-repeat;
}

.s-zoom {
  width: 39px;
  margin-left: 2px;
}

.s-paper {
  width: 32px;
  margin: 0 2px;
}

.s-width {
  width: 43px;
}

.s-color {
  width: 59px;
  margin-left: 1px;
  padding-left: 11px;
  border-color: #ddd;
  background: linear-gradient(#111, #111) 2px 2px / 8px 8px no-repeat,
    #fff url("data:image/svg+xml,%3Csvg xmlns='http://www.w3.org/2000/svg' width='9' height='12'%3E%3Cpath d='M2 5l2 2 2-2' fill='none' stroke='%23555'/%3E%3C/svg%3E") right center no-repeat;
}

.s-pen,
.s-style {
  background-image: linear-gradient(#111, #111), url("data:image/svg+xml,%3Csvg xmlns='http://www.w3.org/2000/svg' width='9' height='12'%3E%3Cpath d='M0 0h9v12H0z' fill='%23e8e8e8'/%3E%3Cpath d='M8.500 0v11.500H0' fill='none' stroke='%23888'/%3E%3Cpath d='M2 5h5L4.500 8z'/%3E%3C/svg%3E");
  background-repeat: no-repeat;
}

.s-pen {
  width: 46px;
  padding-left: 9px;
  background-position: 1px 1px, right center;
  background-size: 7px 7px, 9px 12px;
}

.s-style {
  width: 69px;
  margin-left: 1px;
  padding-left: 31px;
  background-position: 3px 5px, right center;
  background-size: 23px 1px, 9px 12px;
}

.spin {
  display: flex;
  align-items: center;
  width: 25px;
  height: 14px;
  border: 1px solid #999;
  background: #fff;
}

.spin input {
  width: 18px;
  height: 12px;
  padding-left: 1px;
}

.spin i {
  width: 5px;
  height: 10px;
  background: linear-gradient(#222, #222) 50% 2px / 3px 2px no-repeat, linear-gradient(#222, #222) 50% 7px / 3px 2px no-repeat, #e4e4e4;
}

.undo {
  display: flex;
  align-items: center;
  justify-content: center;
  width: 45px;
  height: 14px;
  border: 1px solid #f4f4f4;
  border-right-color: #a8b8ba;
  border-bottom-color: #a8b8ba;
  background: linear-gradient(to right, #fafafa, #c4e0e2);
}

.undo .icon {
  color: #228;
}

.undo:disabled,
.undo:disabled .icon {
  color: #b6c8ca;
}

/* main area */
.main {
  flex: 1;
  display: grid;
  grid-template-columns: 58px 1fr 113px;
}

/* left palette */
.palette {
  display: flex;
  flex-direction: column;
  gap: 3px;
  padding: 15px 3px 0 1px;
}

.group {
  display: flex;
  flex-direction: column;
  border: 1px solid #fafafa;
  border-right-color: var(--edge);
  border-bottom-color: var(--edge);
}

.g1 {
  height: 15px;
}

.g2 {
  height: 29px;
}

.g5 {
  height: 74px;
  margin-bottom: 1px;
}

.g7 {
  height: 102px;
}

.g8 {
  height: 115px;
}

.first {
  margin-bottom: 6px;
}

.group button {
  flex: 1;
  position: relative;
  display: flex;
  align-items: center;
  min-height: 0;
  padding-left: 3px;
  border-bottom: 1px solid #c4c2be;
  border-right: 1px solid #c4c2be;
  background: linear-gradient(100deg, #d9d6d1, #e9e7e4);
}

.group span {
  flex: 1;
  padding-right: 3px;
  text-align: center;
  font-weight: 500;
}

.group .sub::after {
  content: '';
  position: absolute;
  left: 13px;
  bottom: 1px;
  border: 1px solid #111;
  border-top-color: transparent;
  border-left-color: transparent;
}

.group .active {
  background: linear-gradient(to right, #7fe6e4, #0fdcdc);
}

/* drawing sheet and rulers */
.workspace {
  display: grid;
  grid-template-columns: 11px 1fr 12px;
  grid-template-rows: 13px 1fr 13px;
  min-width: 0;
  background: #fff;
}

.unit {
  overflow: hidden;
  border: 1px solid #c8d8d8;
  background: #eef4f4;
  font: 6px/9px var(--gothic);
  color: #111;
  display: flex;
  justify-content: center;
}

.unit.foot {
  align-items: flex-end;
}

.ruler-x,
.ruler-y,
.drawing {
  width: 100%;
  height: 100%;
  overflow: hidden;
  min-width: 0;
  min-height: 0;
}

.ruler-x,
.ruler-y {
  background: #fff;
  font: 7px var(--gothic);
}

.ruler-x {
  border-top: 1px solid #aaa;
}

.ruler-y {
  border-left: 1px solid #aaa;
}

.band {
  fill: #b4b4b4;
}

.tick {
  stroke: #333;
}

.tick.five {
  stroke: #f08078;
}

.tick.cursor {
  stroke: #6468e0;
}

.cad {
  fill: none;
  stroke: #444;
}

.cad.soft {
  stroke: #808080;
}

.cad.picked {
  stroke: #111;
  stroke-width: 2;
  stroke-dasharray: 4 1;
}

.guide {
  fill: none;
  stroke: #ececf2;
}

.scroll-y {
  display: flex;
  flex-direction: column;
  background: #f0f0f0;
  font: 7px/10px var(--gothic);
  text-align: center;
}

.scroll-y button {
  height: 10px;
}

.scroll-y i {
  height: 11px;
  margin: 0 1px;
  background: #c8c8c8;
}

.scroll-y .down {
  margin-top: auto;
}

.sheets {
  display: flex;
  align-items: stretch;
  gap: 2px;
  padding-left: 3px;
  font-size: 7px;
}

.sheets > button {
  padding: 0 3px 0 2px;
  background: #f0f0f0;
  color: #222;
}

.sheets .current {
  background: #fff;
}

.scroll-x {
  display: flex;
  align-items: center;
  width: 125px;
  margin-left: auto;
  border: 1px solid #999;
  border-bottom: 0;
  background: #f0f0f0;
}

.scroll-x button {
  width: 12px;
}

.scroll-x i {
  width: 11px;
  height: 10px;
  margin: 0 auto 0 54px;
  background: #c8c8c8;
}

/* right side */
.side {
  padding: 0 1px 0 2px;
}

.snap {
  display: flex;
  height: 22px;
  border-bottom: 1px solid var(--edge);
}

.snap-grid {
  width: 17px;
  height: 18px;
  margin-top: 2px;
  border: 1px solid #888;
  background: #f8f8f8;
  display: grid;
  place-items: center;
}

.snap-grid svg {
  width: 12px;
  height: 12px;
}

.snap .drop {
  width: 7px;
  height: 20px;
}

.snap-set {
  flex: 1;
}

.snap-icons {
  display: grid;
  grid-template-columns: repeat(6, 1fr);
}

.snap-icons button {
  height: 14px;
  display: grid;
  place-items: center;
  background: linear-gradient(100deg, #e8f2fb, #a8d0f8);
}

.snap-all {
  display: flex;
  justify-content: space-evenly;
  font: bold 6px/8px 'Liberation Mono', monospace;
  color: #22c;
}

.snap-all i {
  color: #177;
}

.areas {
  display: grid;
  grid-template-columns: 1fr 11px;
  margin-top: 24px;
  height: 47px;
  border: 1px solid #aaa;
  background: #fafafa;
}

.areas table {
  height: 45px;
  color: #22d;
  font-size: 7px;
}

.areas th,
.areas td {
  border: 1px solid #ccc;
  border-top: 0;
  border-left: 0;
}

.areas td {
  height: 11px;
}

.areas th:nth-child(1),
.areas th:nth-child(2),
.layers th {
  width: 12px;
}

.areas th:nth-child(3) {
  width: 33px;
}

.areas .icon {
  display: inline-block;
  width: 10px;
  height: 10px;
  vertical-align: middle;
}

.areas .name {
  font-feature-settings: 'palt';
  text-align: center;
}

.areas .scroll-y {
  min-width: 0;
}

.area-tools {
  display: grid;
  grid-template-columns: repeat(5, 1fr);
  height: 16px;
  margin-top: 1px;
  border-bottom: 1px solid var(--edge);
}

.area-tools button {
  display: grid;
  place-items: center;
  border: 1px solid #f6f6f6;
  border-right-color: #bbb;
  border-bottom-color: #bbb;
  background: #e2dfda;
}

.layers {
  margin-top: 3px;
  border: 1px solid #aaa;
  padding: 0 2px 0 0;
}

.layer-head {
  display: flex;
  align-items: center;
  gap: 2px;
  height: 15px;
  background: #fff;
}

.lit {
  background: #b8dcf8;
}

.layer-head .icon {
  width: 12px;
  height: 12px;
}

.s-group {
  flex: 1;
  min-width: 0;
  padding: 0;
  border: 0;
  font-size: 7px;
  background: #fff url("data:image/svg+xml,%3Csvg xmlns='http://www.w3.org/2000/svg' width='9' height='12'%3E%3Cpath d='M2 5h5L4.500 8z'/%3E%3C/svg%3E") right center no-repeat;
}

.layer-groups {
  display: grid;
  grid-template-columns: 24px 1fr;
  height: 28px;
}

.group-label {
  background: #fff;
  color: #22c;
  font: 7px/9px var(--gothic);
}

.group-label button {
  display: block;
  width: 100%;
  height: 9px;
  background: #dedbd6;
  color: #222;
  line-height: 9px;
}

.numbers {
  display: grid;
  grid-template-columns: repeat(8, 1fr);
  gap: 1px;
}

.numbers button {
  min-width: 0;
  background: #e6e3df;
  font: 7px/12px var(--gothic);
  text-align: center;
}

.numbers .on {
  background: #a8d4fa;
  color: #22d;
  font-weight: bold;
}

.layers table {
  height: 181px;
  background: #f6f6f6;
}

.layers th,
.layers td {
  border: 1px solid #c4c4c4;
  font-size: 7px;
  line-height: 8px;
  text-align: center;
}

.layers th:nth-child(5) {
  width: 29px;
}

.layers th:nth-child(6) {
  width: 11px;
}

.layers th:nth-child(7) {
  width: auto;
}

.layers td .icon {
  width: 10px;
  height: 9px;
  margin: auto;
}

.swatch {
  display: block;
  width: 9px;
  height: 9px;
  margin: auto;
}

.layers .current {
  color: #22d;
  font-weight: bold;
  background: #cfe4fa;
}

.layer-foot {
  display: flex;
  align-items: center;
  gap: 3px;
  height: 17px;
  padding-left: 2px;
  color: #e020e0;
}

.layer-foot button {
  margin-left: auto;
  width: 21px;
  height: 12px;
  border: 1px solid #ccc;
  background: #f6f4f0;
  color: #e09088;
}

/* status bar */
.status {
  display: flex;
  align-items: center;
  height: 14px;
  background: #f0f0f0;
  font: 7px/11px var(--ui);
}

.mode,
.hint {
  height: 11px;
  padding-left: 2px;
  background: #ffffec;
  font: 7px/11px var(--gothic);
}

.mode {
  width: 63px;
  color: #b030e0;
}

.hint {
  width: 324px;
  padding-left: 3px;
  border-left: 1px solid #ddd;
  color: #22d;
}

.pos {
  width: 40px;
  padding-left: 3px;
  border-right: 1px solid #ddd;
}

.num {
  width: 108px;
  padding-left: 4px;
}

.box {
  width: 18px;
  height: 12px;
  margin-right: 3px;
  border: 1px solid #888;
  border-right: 0;
  border-bottom: 0;
  text-align: center;
}

/* windows taskbar */
.taskbar {
  display: flex;
  align-items: stretch;
  height: 25px;
  background: #29323a;
  color: #fff;
  font: 7px/11px var(--ui);
}

.taskbar svg {
  width: 12px;
  height: 12px;
}

.start {
  width: 30px;
  display: grid;
  place-items: center;
}

.taskbar .start svg {
  width: 10px;
  height: 10px;
}

.search {
  display: flex;
  align-items: center;
  gap: 6px;
  width: 215px;
  padding-left: 7px;
  background: #f2f2f2;
}

.search input {
  flex: 1;
  min-width: 0;
  font: 9px/16px 'Noto Sans CJK JP', sans-serif;
  font-feature-settings: 'palt';
}

.search input::placeholder {
  color: #444;
}

.apps {
  display: grid;
  grid-template-columns: repeat(10, 1fr);
  width: 307px;
}

.apps button {
  position: relative;
  display: grid;
  place-items: center;
}

.apps svg {
  width: 14px;
  height: 14px;
}

.apps em {
  position: absolute;
  right: 2px;
  bottom: 2px;
  padding: 0 2px;
  border-radius: 6px;
  background: #444c54;
  font-size: 7px;
  font-weight: bold;
}

.apps .cad-app {
  background: #56626c;
  border-bottom: 2px solid #76b9ed;
}

.apps .running {
  border-bottom: 2px solid #76b9ed;
}

.apps .alert {
  background: #b8672c;
  border-bottom: 2px solid #e8803a;
}

.tray {
  display: flex;
  align-items: center;
  gap: 3px;
  margin-left: auto;
}

.tray svg {
  width: 12px;
  height: 10px;
}

.tray b {
  width: 12px;
  font: bold 9px/12px 'Liberation Serif', serif;
  text-align: center;
}

.taskbar time {
  width: 54px;
  margin: 1px 8px 0 7px;
  text-align: center;
}

.taskbar .note {
  margin: 6px 15px 0 0;
}
```
FILE: script.js
```js
const NS = 'http://www.w3.org/2000/svg';
const rulerX = document.getElementById('rulerX');
const rulerY = document.getElementById('rulerY');
const dots = document.getElementById('dots');

// 10mm on the sheet in screen pixels, and where 120 / 340 fall
const STEP = 75.43;
const X120 = 33;
const Y340 = 64;

function add(parent, name, attrs, text) {
  const el = document.createElementNS(NS, name);
  for (const key in attrs) el.setAttribute(key, attrs[key]);
  if (text) el.textContent = text;
  parent.appendChild(el);
  return el;
}

// top ruler
add(rulerX, 'rect', { class: 'band', x: 0, y: 7, width: '100%', height: 6 });
for (let n = 116; n <= 248; n++) {
  const x = Math.round(X120 + (n - 120) * STEP / 10) + 0.5;
  const five = n % 5 === 0;
  add(rulerX, 'path', { class: five ? 'tick five' : 'tick', d: `M${x} ${five ? 7 : 8}V11` });
  if (n % 10 === 0) {
    add(rulerX, 'text', { x: x, y: 6, 'text-anchor': 'middle' }, String(n));
  } else if (five) {
    add(rulerX, 'circle', { cx: x, cy: 3.5, r: 0.6 });
  }
}
add(rulerX, 'path', { class: 'tick cursor', d: 'M687.5 0V12' });

// left ruler
add(rulerY, 'rect', { class: 'band', x: 6, y: 0, width: 5, height: '100%' });
for (let n = 348; n >= 278; n--) {
  const y = Math.round(Y340 + (340 - n) * STEP / 10) + 0.5;
  const five = n % 5 === 0;
  add(rulerY, 'path', { class: five ? 'tick five' : 'tick', d: `M${five ? 6 : 7} ${y}H10` });
  if (n % 10 === 0) {
    add(rulerY, 'text', { transform: `translate(5 ${y}) rotate(-90)`, 'text-anchor': 'middle' }, String(n));
  } else if (five) {
    add(rulerY, 'circle', { cx: 2.5, cy: y, r: 0.6 });
  }
}
add(rulerY, 'path', { class: 'tick cursor', d: 'M0 348.5H10' });

// grid points
for (let i = 0; i < 13; i++) {
  for (let j = 0; j < 7; j++) {
    add(dots, 'rect', { x: Math.round(X120 + i * STEP), y: Math.round(Y340 + j * STEP), width: 1, height: 1, fill: '#999' });
  }
}

// layers
const colors = ['#f00', '#00f', '#ff0', '#0878f0', '#f828f8', '#008000', '#ffffc8', '#ffff80',
  '#e0ffc0', '#a8f0a8', '#80ff80', '#88f4f4', '#38a0f0', '#00f', '#f8c0f8', '#f07020'];
const icon = name => `<svg class="icon"><use href="#i-${name}" /></svg>`;

document.getElementById('numbers').innerHTML =
  colors.map((c, i) => `<button class="${i ? '' : 'on'}">${i}</button>`).join('');

document.getElementById('layerRows').innerHTML = colors.map((c, i) => `
  <tr>
    <td class="${i ? '' : 'current'}">${i}</td>
    <td>${i ? '' : icon('pen')}</td>
    <td>${icon('eye')}</td>
    <td>${icon('lock')}</td>
    <td>画層${i}</td>
    <td><i class="swatch" style="background:${c}"></i></td>
    <td>0.09</td>
  </tr>`).join('');
```
